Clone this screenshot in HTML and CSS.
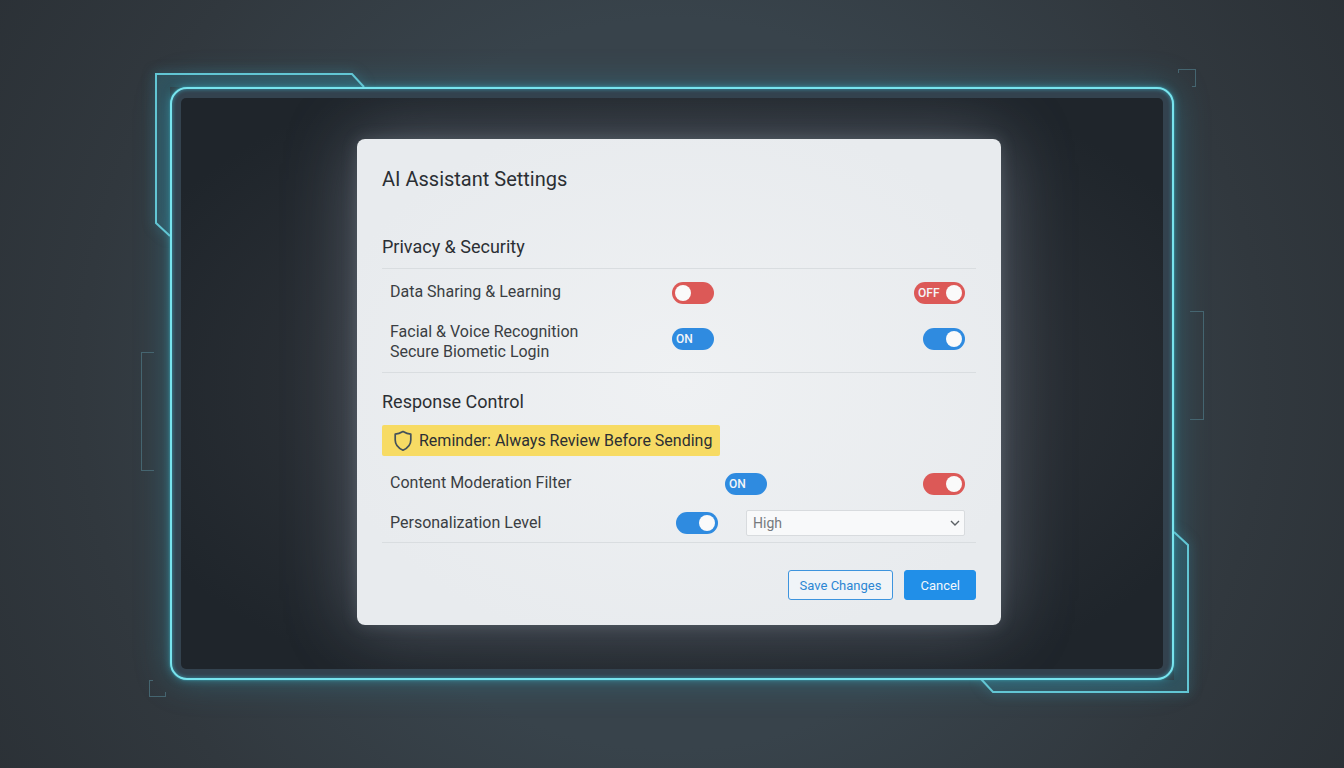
FILE: index.html
```html
<!DOCTYPE html>
<html lang="en">
<head>
  <meta charset="UTF-8" />
  <title>AI Assistant Settings</title>
  <link rel="stylesheet" href="styles.css">
</head>
<body>
  <div class="frame">
    <svg class="deco corner corner-top" width="220" height="174" viewBox="0 0 220 174" aria-hidden="true">
      <path d="M214 19 L202 6 H6 V155 L20 168" />
    </svg>
    <svg class="deco corner corner-bottom" width="220" height="172" viewBox="0 0 220 172" aria-hidden="true">
      <path d="M7 153 L19 166 H214 V19 L200 6" />
    </svg>
    <svg class="deco mark mark-top" width="19" height="19" viewBox="0 0 19 19" aria-hidden="true">
      <path d="M1 5 V1 H18 V18 H15" />
    </svg>
    <svg class="deco mark mark-bottom" width="19" height="19" viewBox="0 0 19 19" aria-hidden="true">
      <path d="M5 1 H1 V17 H17 V13" />
    </svg>
    <svg class="deco mark bracket-left" width="14" height="120" viewBox="0 0 14 120" aria-hidden="true">
      <path d="M14 1 H1 V119 H14" />
    </svg>
    <svg class="deco mark bracket-right" width="14" height="110" viewBox="0 0 14 110" aria-hidden="true">
      <path d="M0 1 H13 V109 H0" />
    </svg>

    <div class="screen">
      <form class="modal">
        <h1>AI Assistant Settings</h1>

        <section class="privacy">
          <h2>Privacy &amp; Security</h2>
          <div class="rows">
            <div class="row">
              <label class="row-label" for="sharing">Data Sharing &amp; Learning</label>
              <span class="toggle red"><input type="checkbox" id="sharing"></span>
              <span class="toggle red wide"><input type="checkbox" aria-label="Data sharing override" checked><span class="state">OFF</span></span>
            </div>
            <div class="row two-line">
              <label class="row-label" for="facial">Facial &amp; Voice Recognition<br>Secure Biometic Login</label>
              <span class="toggle blue no-knob"><input type="checkbox" id="facial" checked><span class="state">ON</span></span>
              <span class="toggle blue"><input type="checkbox" aria-label="Secure login" checked></span>
            </div>
          </div>
        </section>

        <section class="response">
          <h2>Response Control</h2>
          <div class="reminder">
            <svg width="20" height="22" viewBox="0 0 20 22" aria-hidden="true">
              <path d="M10 1.5 C12.5 3 15 4 17.8 4.2 V10 C17.8 15 14.5 18.2 10 20.2 C5.5 18.2 2.2 15 2.2 10 V4.2 C5 4 7.5 3 10 1.5 Z" />
            </svg>
            <span>Reminder: Always Review Before Sending</span>
          </div>
          <div class="rows">
            <div class="row filter-row">
              <label class="row-label" for="filter">Content Moderation Filter</label>
              <span class="toggle blue no-knob"><input type="checkbox" id="filter" checked><span class="state">ON</span></span>
              <span class="toggle red"><input type="checkbox" aria-label="Moderation filter override" checked></span>
            </div>
            <div class="row level-row">
              <label class="row-label" for="level">Personalization Level</label>
              <span class="toggle blue"><input type="checkbox" aria-label="Personalization" checked></span>
              <span class="select-box">
                <select id="level">
                  <option>High</option>
                  <option>Medium</option>
                  <option>Low</option>
                </select>
                <svg width="10" height="6" viewBox="0 0 10 6" aria-hidden="true"><path d="M1 1 L5 5 L9 1" /></svg>
              </span>
            </div>
          </div>
        </section>

        <div class="actions">
          <button type="submit" class="save-btn">Save Changes</button>
          <button type="button" class="cancel-btn">Cancel</button>
        </div>
      </form>
    </div>
  </div>
</body>
</html>
```
FILE: styles.css
```css
* {
  box-sizing: border-box;
}

body {
  margin: 0;
  min-height: 100vh;
  padding: 87px 170px;
  font-family: Roboto, "Liberation Sans", sans-serif;
  color: #2b2f34;
  background: radial-gradient(55% 95% at center, #38434b 50%, #31383e 80%, #272c31 125%);
}

/* glowing frame */
.frame {
  position: relative;
  isolation: isolate;
  padding: 9px;
  border: 2px solid #78e4ee;
  border-radius: 17px;
  background: #33424e;
  box-shadow: 0 0 2px #3fa9ba, 0 0 8px rgba(60, 180, 200, 0.5), 0 0 34px rgba(50, 150, 175, 0.4), inset 0 0 4px rgba(60, 180, 205, 0.7);
}

.screen {
  padding: 41px 162px 44px 176px;
  border-radius: 5px;
  background: radial-gradient(ellipse at center, #2b3036 45%, #1f252b 85%);
  overflow: hidden;
}

.deco {
  position: absolute;
  z-index: -1;
  overflow: visible;
  fill: none;
}

.corner path {
  stroke: #62c6d4;
  stroke-width: 2;
  fill: rgba(45, 110, 130, 0.2);
}

.corner {
  filter: drop-shadow(0 0 6px rgba(60, 180, 205, 0.5));
}

.corner-top {
  left: -22px;
  top: -21px;
  clip-path: polygon(-20px -20px, 240px -20px, 240px 19px, 20px 19px, 20px 190px, -20px 190px);
}

.corner-bottom {
  right: -22px;
  bottom: -20px;
  clip-path: polygon(-20px 154px, 200px 154px, 200px -20px, 240px -20px, 240px 192px, -20px 192px);
}

.mark {
  stroke: #456570;
  stroke-width: 1;
  shape-rendering: crispEdges;
}

.mark-top {
  right: -24px;
  top: -21px;
}

.mark-bottom {
  left: -24px;
  bottom: -20px;
}

.bracket-left {
  left: -32px;
  top: 262px;
}

.bracket-right {
  right: -32px;
  top: 221px;
}

/* settings panel */
.modal {
  padding: 26px 25px 25px;
  border-radius: 8px;
  background: radial-gradient(ellipse at center, #eff1f3, #e8ebee 80%);
  box-shadow: 0 0 16px rgba(170, 180, 195, 0.22), 0 0 70px rgba(170, 180, 200, 0.35);
}

h1, h2 {
  margin: 0;
  font-weight: 400;
}

h1 {
  margin-bottom: 42px;
  font-size: 20px;
  line-height: 28px;
}

h2 {
  font-size: 18px;
  line-height: 24px;
}

section {
  border-bottom: 1px solid #d9dde0;
}

.privacy h2 {
  padding-bottom: 9px;
  border-bottom: 1px solid #d9dde0;
}

.rows {
  display: grid;
  padding: 0 11px 0 8px;
}

.privacy .rows {
  gap: 18px;
  padding-top: 13px;
  padding-bottom: 10px;
}

.response {
  padding-top: 17px;
}

.response .rows {
  gap: 15px;
  padding-top: 17px;
  padding-bottom: 6px;
}

.row {
  display: grid;
  grid-template-columns: 282px 42px 1fr;
  align-items: start;
}

.row > :last-child {
  justify-self: end;
}

.filter-row {
  grid-template-columns: 335px 42px 1fr;
}

.level-row {
  grid-template-columns: 286px 42px 1fr;
  align-items: center;
}

.two-line .toggle {
  margin-top: 6px;
}

.row-label {
  font-size: 16px;
  line-height: 20px;
  color: #3a3e43;
}

.toggle {
  position: relative;
  display: block;
  width: 42px;
  height: 22px;
}

.toggle input {
  display: flex;
  align-items: center;
  width: 100%;
  height: 100%;
  margin: 0;
  padding: 0 3px;
  border-radius: 11px;
  appearance: none;
  cursor: pointer;
}

.toggle input::before {
  content: "";
  width: 16px;
  height: 16px;
  border-radius: 50%;
  background: #fafafa;
}

.toggle input:checked::before {
  margin-left: auto;
}

.toggle.no-knob input::before {
  display: none;
}

.toggle.wide {
  width: 51px;
}

.red input {
  background: #dc5957;
}

.blue input {
  background: #2f8be0;
}

.state {
  position: absolute;
  left: 4px;
  top: 0;
  font-size: 12px;
  font-weight: 500;
  line-height: 22px;
  color: #f4f6f8;
  pointer-events: none;
}

.reminder {
  display: flex;
  align-items: center;
  gap: 6px;
  width: fit-content;
  height: 31px;
  margin-top: 11px;
  padding: 0 8px 0 11px;
  border-radius: 2px;
  background: #f7db64;
  font-size: 16px;
}

.reminder svg {
  fill: none;
  stroke: #44515a;
  stroke-width: 1.7;
  stroke-linejoin: round;
}

.select-box {
  position: relative;
  width: 219px;
}

.select-box select {
  display: block;
  width: 100%;
  height: 26px;
  padding: 0 6px;
  border: 1px solid #d8dbde;
  border-radius: 2px;
  background: #f8f9fa;
  color: #75797d;
  font-family: inherit;
  font-size: 14px;
  appearance: none;
}

.select-box svg {
  position: absolute;
  right: 5px;
  top: 10px;
  fill: none;
  stroke: #5b6065;
  stroke-width: 1.4;
  pointer-events: none;
}

.actions {
  display: flex;
  justify-content: flex-end;
  gap: 11px;
  margin-top: 27px;
}

.actions button {
  height: 30px;
  border: 1px solid #3d94de;
  border-radius: 3px;
  font-family: inherit;
  font-size: 13px;
  cursor: pointer;
}

.save-btn {
  padding: 0 11px;
  background: #f0f4f8;
  color: #2c86d3;
}

.actions .cancel-btn {
  padding: 0 15px;
  border-color: #218fe8;
  background: #218fe8;
  color: #f2f7fc;
}
```
